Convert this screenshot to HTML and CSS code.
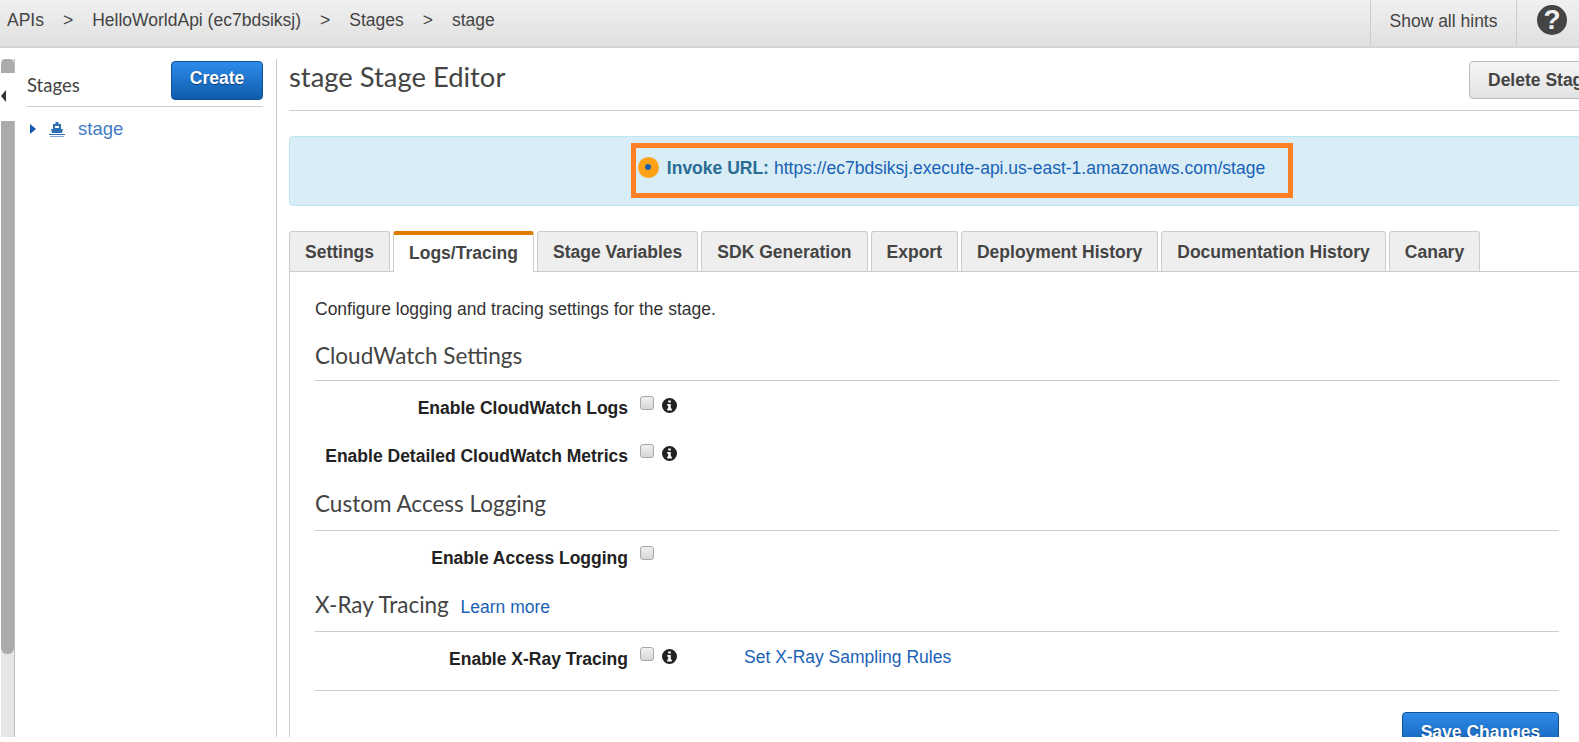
FILE: index.html
```html
<!DOCTYPE html>
<html lang="en">
<head>
	<meta charset="utf-8" />
	<title>stage Stage Editor</title>
	<link rel="stylesheet" href="styles.css">
</head>
<body>
	<div class="app">
		<div class="topbar">
			<div class="crumbs">
				<a>APIs</a><span class="sep">&gt;</span>
				<a>HelloWorldApi (ec7bdsiksj)</a><span class="sep">&gt;</span>
				<a>Stages</a><span class="sep">&gt;</span>
				<a>stage</a>
			</div>
			<div class="hints">Show all hints</div>
			<div class="help"><span class="help-icon">?</span></div>
		</div>
		<div class="columns">
			<div class="rail">
				<div class="thumb-top"></div>
				<div class="rail-gap"><span class="rail-arrow"></span></div>
				<div class="thumb"></div>
			</div>
			<div class="sidebar">
				<div class="side-head">
					<span class="side-title">Stages</span>
					<button class="btn-blue btn-create">Create</button>
				</div>
				<div class="tree-row">
					<span class="tree-arrow"></span>
					<svg class="ship" width="16" height="15" viewBox="0 0 16 15">
						<rect x="6.5" y="0" width="3" height="2" fill="#2f6fb5" />
						<path d="M4 2h8v5h2l-1 4H3L2 7h2z" fill="#2f6fb5" />
						<rect x="6" y="4" width="4" height="2" fill="#fff" />
						<rect x="0" y="12" width="16" height="1" fill="#2f6fb5" />
						<rect x="1" y="14" width="14" height="1" fill="#7ba6d6" />
					</svg>
					<a class="tree-link">stage</a>
				</div>
			</div>
			<div class="main">
				<div class="editor-head">
					<h1>stage Stage Editor</h1>
					<button class="btn-grey">Delete Stage</button>
				</div>
				<div class="invoke">
					<span class="dot"><span class="dot-in"></span></span>
					<b>Invoke URL:</b>
					<a class="link">https://ec7bdsiksj.execute-api.us-east-1.amazonaws.com/stage</a>
				</div>
				<div class="tabs">
					<div class="tab">Settings</div>
					<div class="tab tab-on">Logs/Tracing</div>
					<div class="tab">Stage Variables</div>
					<div class="tab">SDK Generation</div>
					<div class="tab">Export</div>
					<div class="tab">Deployment History</div>
					<div class="tab">Documentation History</div>
					<div class="tab">Canary</div>
				</div>
				<div class="pane">
					<p class="intro">Configure logging and tracing settings for the stage.</p>
					<h2>CloudWatch Settings</h2>
					<div class="row">
						<label>Enable CloudWatch Logs</label>
						<input type="checkbox" />
						<svg class="info" width="15" height="15" viewBox="0 0 15 15"><path fill-rule="evenodd" d="M7.5 0a7.5 7.5 0 1 0 0 15a7.5 7.5 0 0 0 0-15zM6.2 2.4h2.6v2.2H6.2zM5.2 6h3.6v4.6h1v1.8H5.2v-1.8h1V7.8h-1z" /></svg>
					</div>
					<div class="row">
						<label>Enable Detailed CloudWatch Metrics</label>
						<input type="checkbox" />
						<svg class="info" width="15" height="15" viewBox="0 0 15 15"><path fill-rule="evenodd" d="M7.5 0a7.5 7.5 0 1 0 0 15a7.5 7.5 0 0 0 0-15zM6.2 2.4h2.6v2.2H6.2zM5.2 6h3.6v4.6h1v1.8H5.2v-1.8h1V7.8h-1z" /></svg>
					</div>
					<h2 class="h2-tight">Custom Access Logging</h2>
					<div class="row">
						<label>Enable Access Logging</label>
						<input type="checkbox" />
					</div>
					<h2 class="h2-tight h2-xray">X-Ray Tracing <a class="link learn">Learn more</a></h2>
					<div class="row row-last">
						<label>Enable X-Ray Tracing</label>
						<input type="checkbox" />
						<svg class="info" width="15" height="15" viewBox="0 0 15 15"><path fill-rule="evenodd" d="M7.5 0a7.5 7.5 0 1 0 0 15a7.5 7.5 0 0 0 0-15zM6.2 2.4h2.6v2.2H6.2zM5.2 6h3.6v4.6h1v1.8H5.2v-1.8h1V7.8h-1z" /></svg>
						<a class="link sampling">Set X-Ray Sampling Rules</a>
					</div>
					<div class="actions">
						<button class="btn-blue btn-save">Save Changes</button>
					</div>
				</div>
			</div>
		</div>
	</div>
</body>
</html>
```

FILE: styles.css
```css
body
{
	margin: 0;
	background-color: #FFFFFF;
	font-family: "Liberation Sans", Arial, sans-serif;
	font-size: 17.5px;
	color: #444444;
	overflow: hidden;
}

.app
{
	height: 737px;
	overflow: hidden;
}

.topbar
{
	display: flex;
	align-items: center;
	height: 46px;
	background: linear-gradient(#F0F0F0, #E0E0E0);
	border-bottom: 2px solid #D4D4D4;
}

.crumbs
{
	flex: 1;
	padding-left: 7px;
	display: flex;
	margin-top: -6px;
}

.sep
{
	margin: 0 19px;
}

.hints
{
	width: 147px;
	height: 45px;
	line-height: 40px;
	text-align: center;
	border-left: 1px solid #CCCCCC;
	border-right: 1px solid #CCCCCC;
	box-sizing: border-box;
}

.help
{
	width: 62px;
	padding-left: 20px;
	box-sizing: border-box;
	margin-top: -6px;
}

.help-icon
{
	display: block;
	width: 30px;
	height: 30px;
	line-height: 30px;
	border-radius: 50%;
	background-color: #444444;
	color: #F0F0F0;
	font-weight: bold;
	font-size: 28px;
	text-align: center;
}

.columns
{
	display: flex;
	height: 689px;
	padding-top: 11px;
	box-sizing: border-box;
}

.rail
{
	width: 13px;
	margin-left: 1px;
	background-color: #E6E6E6;
	border-right: 1px solid #BBBBBB;
	display: flex;
	flex-direction: column;
	flex-shrink: 0;
}

.thumb-top
{
	height: 14px;
	background-color: #ABABAB;
	border-radius: 5px 5px 0 0;
}

.rail-gap
{
	height: 48px;
	background-color: #FFFFFF;
	margin-right: -1px;
	display: flex;
	align-items: center;
}

.rail-arrow
{
	border-style: solid;
	border-width: 6px 5px 6px 0;
	border-color: transparent #333333 transparent transparent;
	margin-left: 0;
	margin-top: -2px;
}

.thumb
{
	height: 533px;
	background-color: #ABABAB;
	border-radius: 0 0 6px 6px;
}

.sidebar
{
	width: 236px;
	padding-right: 13px;
	margin-left: 12px;
	border-right: 1px solid #CCCCCC;
	flex-shrink: 0;
}

.side-head
{
	display: flex;
	justify-content: space-between;
	align-items: flex-end;
	height: 48px;
	border-bottom: 1px solid #CCCCCC;
	box-sizing: border-box;
	padding-bottom: 7px;
}

.side-title
{
	font-family: Lato, sans-serif;
	font-size: 18.5px;
	color: #444444;
	margin-bottom: 3px;
}

.btn-blue
{
	font-family: "Liberation Sans", Arial, sans-serif;
	font-weight: bold;
	font-size: 17.5px;
	color: #FFFFFF;
	background: linear-gradient(#2E8BEA, #0F5CAD);
	border: 1px solid #0F5297;
	border-radius: 4px;
	text-shadow: 0 1px 1px #0A3F78;
	padding: 0;
}

.btn-create
{
	width: 92px;
	height: 39px;
	margin-bottom: -1px;
	padding-bottom: 4px;
}

.tree-row
{
	display: flex;
	align-items: center;
	height: 20px;
	margin-top: 12px;
	padding-left: 3px;
}

.tree-arrow
{
	border-style: solid;
	border-width: 5.5px 0 5.5px 6px;
	border-color: transparent transparent transparent #0F5CAD;
	margin-right: 13px;
}

.ship
{
	margin-right: 13px;
}

.tree-link
{
	font-size: 18.5px;
	color: #3F7CC4;
}

.main
{
	margin-left: 12px;
	width: 1334px;
	flex-shrink: 0;
}

.editor-head
{
	display: flex;
	justify-content: space-between;
	align-items: flex-start;
	height: 51px;
	border-bottom: 1px solid #CCCCCC;
}

h1
{
	margin: 0;
	font-family: Lato, sans-serif;
	font-weight: normal;
	font-size: 27.4px;
	line-height: 36px;
	color: #444444;
}

.btn-grey
{
	width: 154px;
	height: 38px;
	margin-top: 2px;
	font-family: "Liberation Sans", Arial, sans-serif;
	font-weight: bold;
	font-size: 17.5px;
	color: #444444;
	background: linear-gradient(#F5F5F5, #E2E2E2);
	border: 1px solid #BBBBBB;
	border-radius: 4px;
	text-align: left;
	padding: 0 0 0 18px;
	white-space: nowrap;
}

.invoke
{
	display: flex;
	justify-content: center;
	align-items: center;
	gap: 5px;
	height: 70px;
	margin-top: 25px;
	box-sizing: border-box;
	background-color: #D8EDF6;
	border: 1px solid #BDE6F2;
	border-radius: 4px;
	color: #2A6C94;
	position: relative;
	padding: 0 9px 5px 0;
}

.invoke::after
{
	content: "";
	position: absolute;
	left: 341px;
	top: 6px;
	width: 652px;
	height: 45px;
	border: 5px solid #FF7F27;
}

.dot
{
	display: flex;
	align-items: center;
	justify-content: center;
	width: 21px;
	height: 21px;
	border-radius: 50%;
	background-color: #FFA216;
	margin: -3px 3px 0 0;
}

.dot-in
{
	width: 6px;
	height: 6px;
	border-radius: 50%;
	background-color: #1A5FAE;
}

.link
{
	color: #1A62B5;
}

.tabs
{
	display: flex;
	align-items: flex-end;
	gap: 3px;
	margin-top: 25px;
	height: 41px;
	border-bottom: 1px solid #CCCCCC;
	box-sizing: border-box;
}

.tab
{
	height: 40px;
	line-height: 40px;
	box-sizing: border-box;
	padding: 0 15px;
	font-weight: bold;
	background-color: #EEEEEE;
	border: 1px solid #CCCCCC;
	border-bottom: 0;
	border-radius: 3px 3px 0 0;
}

.tab-on
{
	height: 41px;
	background-color: #FFFFFF;
	border-top: 4px solid #E07B00;
	margin-bottom: -1px;
	line-height: 36px;
}

.pane
{
	border-left: 1px solid #CCCCCC;
	padding: 27px 0 0 25px;
	height: 500px;
	box-sizing: border-box;
	width: 1270px;
}

.intro
{
	margin: 0;
	line-height: 20px;
	color: #333333;
}

h2
{
	margin: 22px 0 0;
	height: 39px;
	line-height: 30px;
	font-family: Lato, sans-serif;
	font-weight: normal;
	font-size: 22.5px;
	color: #444444;
	border-bottom: 1px solid #CCCCCC;
}

.h2-tight
{
	margin-top: 12px;
	height: 41px;
}

.h2-xray
{
	margin-top: 11px;
}

.learn
{
	font-family: "Liberation Sans", Arial, sans-serif;
	font-size: 17.5px;
	margin-left: 6px;
}

.row
{
	display: flex;
	align-items: flex-start;
	height: 48px;
	padding-top: 16px;
	box-sizing: border-box;
}

.row label
{
	width: 313px;
	margin-top: 1px;
	text-align: right;
	font-weight: bold;
	color: #222222;
	line-height: 20px;
}

.row input
{
	appearance: none;
	width: 14px;
	height: 14px;
	margin: -1px 0 0 12px;
	background: linear-gradient(#F0F0F0, #D8D8D8);
	border: 1px solid #A8A8A8;
	border-radius: 3px;
}

.info
{
	margin: 1px 0 0 8px;
	fill: #222222;
}

.sampling
{
	margin: 1px 0 0 67px;
	line-height: 16px;
}

.row-last
{
	height: 59px;
	border-bottom: 1px solid #CCCCCC;
}

.actions
{
	display: flex;
	justify-content: flex-end;
	padding-top: 21px;
}

.btn-save
{
	width: 157px;
	height: 40px;
}
```
